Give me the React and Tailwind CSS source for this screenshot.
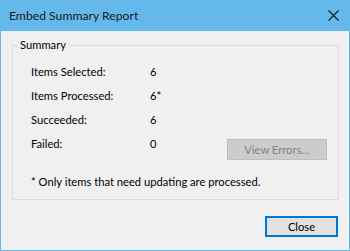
import React from 'react';

const rows = [
  { label: 'Items Selected:', value: '6' },
  { label: 'Items Processed:', value: '6*' },
  { label: 'Succeeded:', value: '6' },
];

const App = () => {
  return (
    <div
      className="w-[350px] h-[251px] flex flex-col bg-[#f0f0f0] border-x border-b border-[#64b8eb] text-[11.2px] text-black"
      style={{ fontFamily: 'Lato, "Noto Sans", sans-serif' }}
    >
      {/* Title bar */}
      <div className="h-[31px] -mx-px flex items-center justify-between bg-[#64b8eb] pl-[9px] pr-[11px]">
        <span className="text-[12.2px] leading-[16px] text-[#1a1a1a]">Embed Summary Report</span>
        <svg width="11" height="11" viewBox="0 0 11 11">
          <path d="M0.5 0.5 L10.5 10.5 M10.5 0.5 L0.5 10.5" stroke="#1a1a1a" strokeWidth="1.1" fill="none" />
        </svg>
      </div>

      {/* Group box */}
      <fieldset className="mt-[6px] ml-[11px] mr-[10px] border border-[#dcdcdc] pb-[9px]">
        <legend className="ml-[5px] px-[2px] leading-[16px]">Summary</legend>
        <div className="pt-[7px] pl-[18px] pr-[11px]">
          {rows.map((r) => (
            <div key={r.label} className="flex h-6 items-center">
              <span className="w-[119px]">{r.label}</span>
              <span>{r.value}</span>
            </div>
          ))}
          <div className="flex items-start">
            <span className="w-[119px] leading-[24px]">Failed:</span>
            <span className="leading-[24px]">0</span>
            <button className="ml-auto mt-[7px] w-[100px] h-[21px] bg-[#cccccc] border border-[#bfbfbf] text-[#838383] text-[11.2px] leading-none">
              View Errors…
            </button>
          </div>
          <p className="mt-[14px] leading-[16px]">* Only items that need updating are processed.</p>
        </div>
      </fieldset>

      {/* Footer */}
      <div className="flex justify-end mt-[16px] mr-[11px]">
        <button className="w-[73px] h-[21px] bg-[#e1e1e1] border-2 border-[#0078d7] text-[11.2px] leading-none">
          Close
        </button>
      </div>
    </div>
  );
};

export default App;
